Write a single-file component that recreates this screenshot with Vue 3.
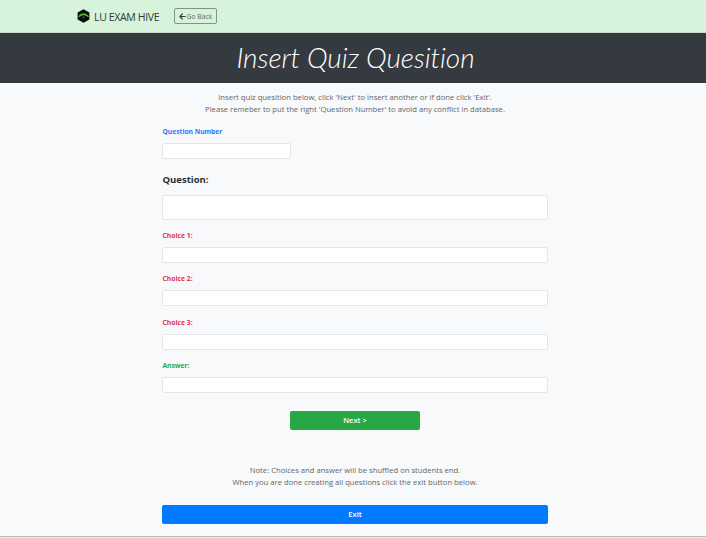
<script setup>
const fields = [
  { label: 'Choice 1:', tone: 'danger' },
  { label: 'Choice 2:', tone: 'danger' },
  { label: 'Choice 3:', tone: 'danger' },
  { label: 'Answer:', tone: 'success' },
]
</script>

<template>
  <div class="page">
    <nav class="nav">
      <svg class="logo" viewBox="0 0 13 14">
        <path d="M6.5 0.2 12.4 3.5v7L6.5 13.8 0.6 10.5v-7z" fill="#080b08" />
        <path d="M.7 7.9 2.5 5.9 4.9 4.6h3.2l2.4 1.3 1.8 2-2.4-.4-2-1.2H5.1L3.1 7.5z" fill="#55c936" />
        <path d="M5.5 7.5h2v1.8h-2z" fill="#49454a" />
        <path d="M5.5 10.8h2" stroke="#304130" stroke-width=".7" fill="none" />
      </svg>
      <span class="brand">LU EXAM HIVE</span>
      <button class="back">
        <svg class="arrow" viewBox="0 0 7 7"><path d="M3.6.7.9 3.5l2.7 2.8M1 3.5h5.6" fill="none" stroke="#343a40" stroke-width="1.2" /></svg>
        <span>Go Back</span>
      </button>
    </nav>
    <header class="hero"><h1>Insert Quiz Quesition</h1></header>
    <main class="content">
      <div class="intro">
        <p>Insert quiz quesition below, click 'Next' to insert another or if done click 'Exit'.</p>
        <p>Please remeber to put the right 'Question Number' to avoid any conflict in database.</p>
      </div>
      <label class="label primary" for="number">Question Number</label>
      <input id="number" class="input short" />
      <label class="question" for="question">Question:</label>
      <input id="question" class="input tall" />
      <div v-for="(f, i) in fields" :key="i" class="field">
        <label class="label" :class="f.tone" :for="'field' + i">{{ f.label }}</label>
        <input :id="'field' + i" class="input" />
      </div>
      <button class="btn next">Next &gt;</button>
      <div class="note">
        <p>Note: Choices and answer will be shuffled on students end.</p>
        <p>When you are done creating all questions click the exit button below.</p>
      </div>
      <button class="btn exit">Exit</button>
    </main>
    <footer class="footer"></footer>
  </div>
</template>

<style>
body { margin: 0; overflow: hidden; }
</style>

<style scoped>
* { box-sizing: border-box; }
.page {
  width: 706px; height: 538px; display: flex; flex-direction: column;
  background: #f8f9fb; color: #62676a; font-family: "Open Sans", "Noto Sans", sans-serif;
}
.nav { height: 33px; flex: none; display: flex; align-items: center; padding-left: 77px; background: #d7f3dc; border-bottom: 1px solid #c8dccd; }
.logo { width: 13px; height: 14px; flex: none; margin-right: 4px; }
.brand { width: 80px; padding-top: 1px; font-size: 10.6px; line-height: 16px; letter-spacing: -.4px; color: #303a34; white-space: nowrap; }
.back {
  display: flex; align-items: center; width: 43px; height: 16px; padding: 0 0 0 4px;
  border: 1px solid #82938a; border-radius: 2px; background: none; color: #5f6d66;
  font: 6.8px/14px "Open Sans", sans-serif; white-space: nowrap;
}
.back span { padding-top: 1px; }
.arrow { width: 7px; height: 7px; flex: none; margin-right: .5px; }
.hero { height: 50px; flex: none; display: flex; justify-content: center; background: #343a40; color: #fff; }
h1 { margin: 0; padding-left: 5px; font: italic 300 28px/49px Lato, sans-serif; letter-spacing: -.08px; font-variant-ligatures: none; white-space: nowrap; }
.content { width: 386px; margin-left: 162px; display: flex; flex-direction: column; height: 453px; padding-top: 8px; }
p { margin: 0; height: 12px; font-size: 7.66px; line-height: 12px; text-align: center; white-space: nowrap; }
.intro { height: 35px; flex: none; }
.label { display: block; height: 12px; flex: none; padding-left: .5px; font-size: 6.7px; line-height: 12px; font-weight: 700; }
.primary { color: #267cf9; }
.danger { color: #dc3545; letter-spacing: .05px; }
.success { color: #28a745; }
.input { display: block; width: 100%; height: 16px; flex: none; margin: 0; padding: 0 5px; background: #fff; border: 1px solid #e2e6e9; border-radius: 2px; outline: 0; }
.short { width: 129px; margin-top: 5px; }
.question { height: 16px; flex: none; margin-top: 13px; padding-left: .5px; font-size: 9.5px; line-height: 16px; font-weight: 700; color: #292e32; }
.tall { height: 25px; margin-top: 7px; margin-bottom: 10px; }
.field { height: 43.4px; flex: none; }
.field .input { margin-top: 5px; }
.btn { display: block; height: 19px; flex: none; padding: 0; border: 0; border-radius: 2px; color: #fff; font: 600 7.5px/19px "Open Sans", sans-serif; text-align: center; }
.next { width: 130px; margin: 7.4px 0 0 128px; background: #28a745; }
.note { margin-top: 34px; height: 41px; flex: none; }
.exit { width: 386px; background: #007bff; }
.footer { height: 2px; flex: none; background: #d7f3dc; border-top: 1px solid #aac5b0; }
</style>
